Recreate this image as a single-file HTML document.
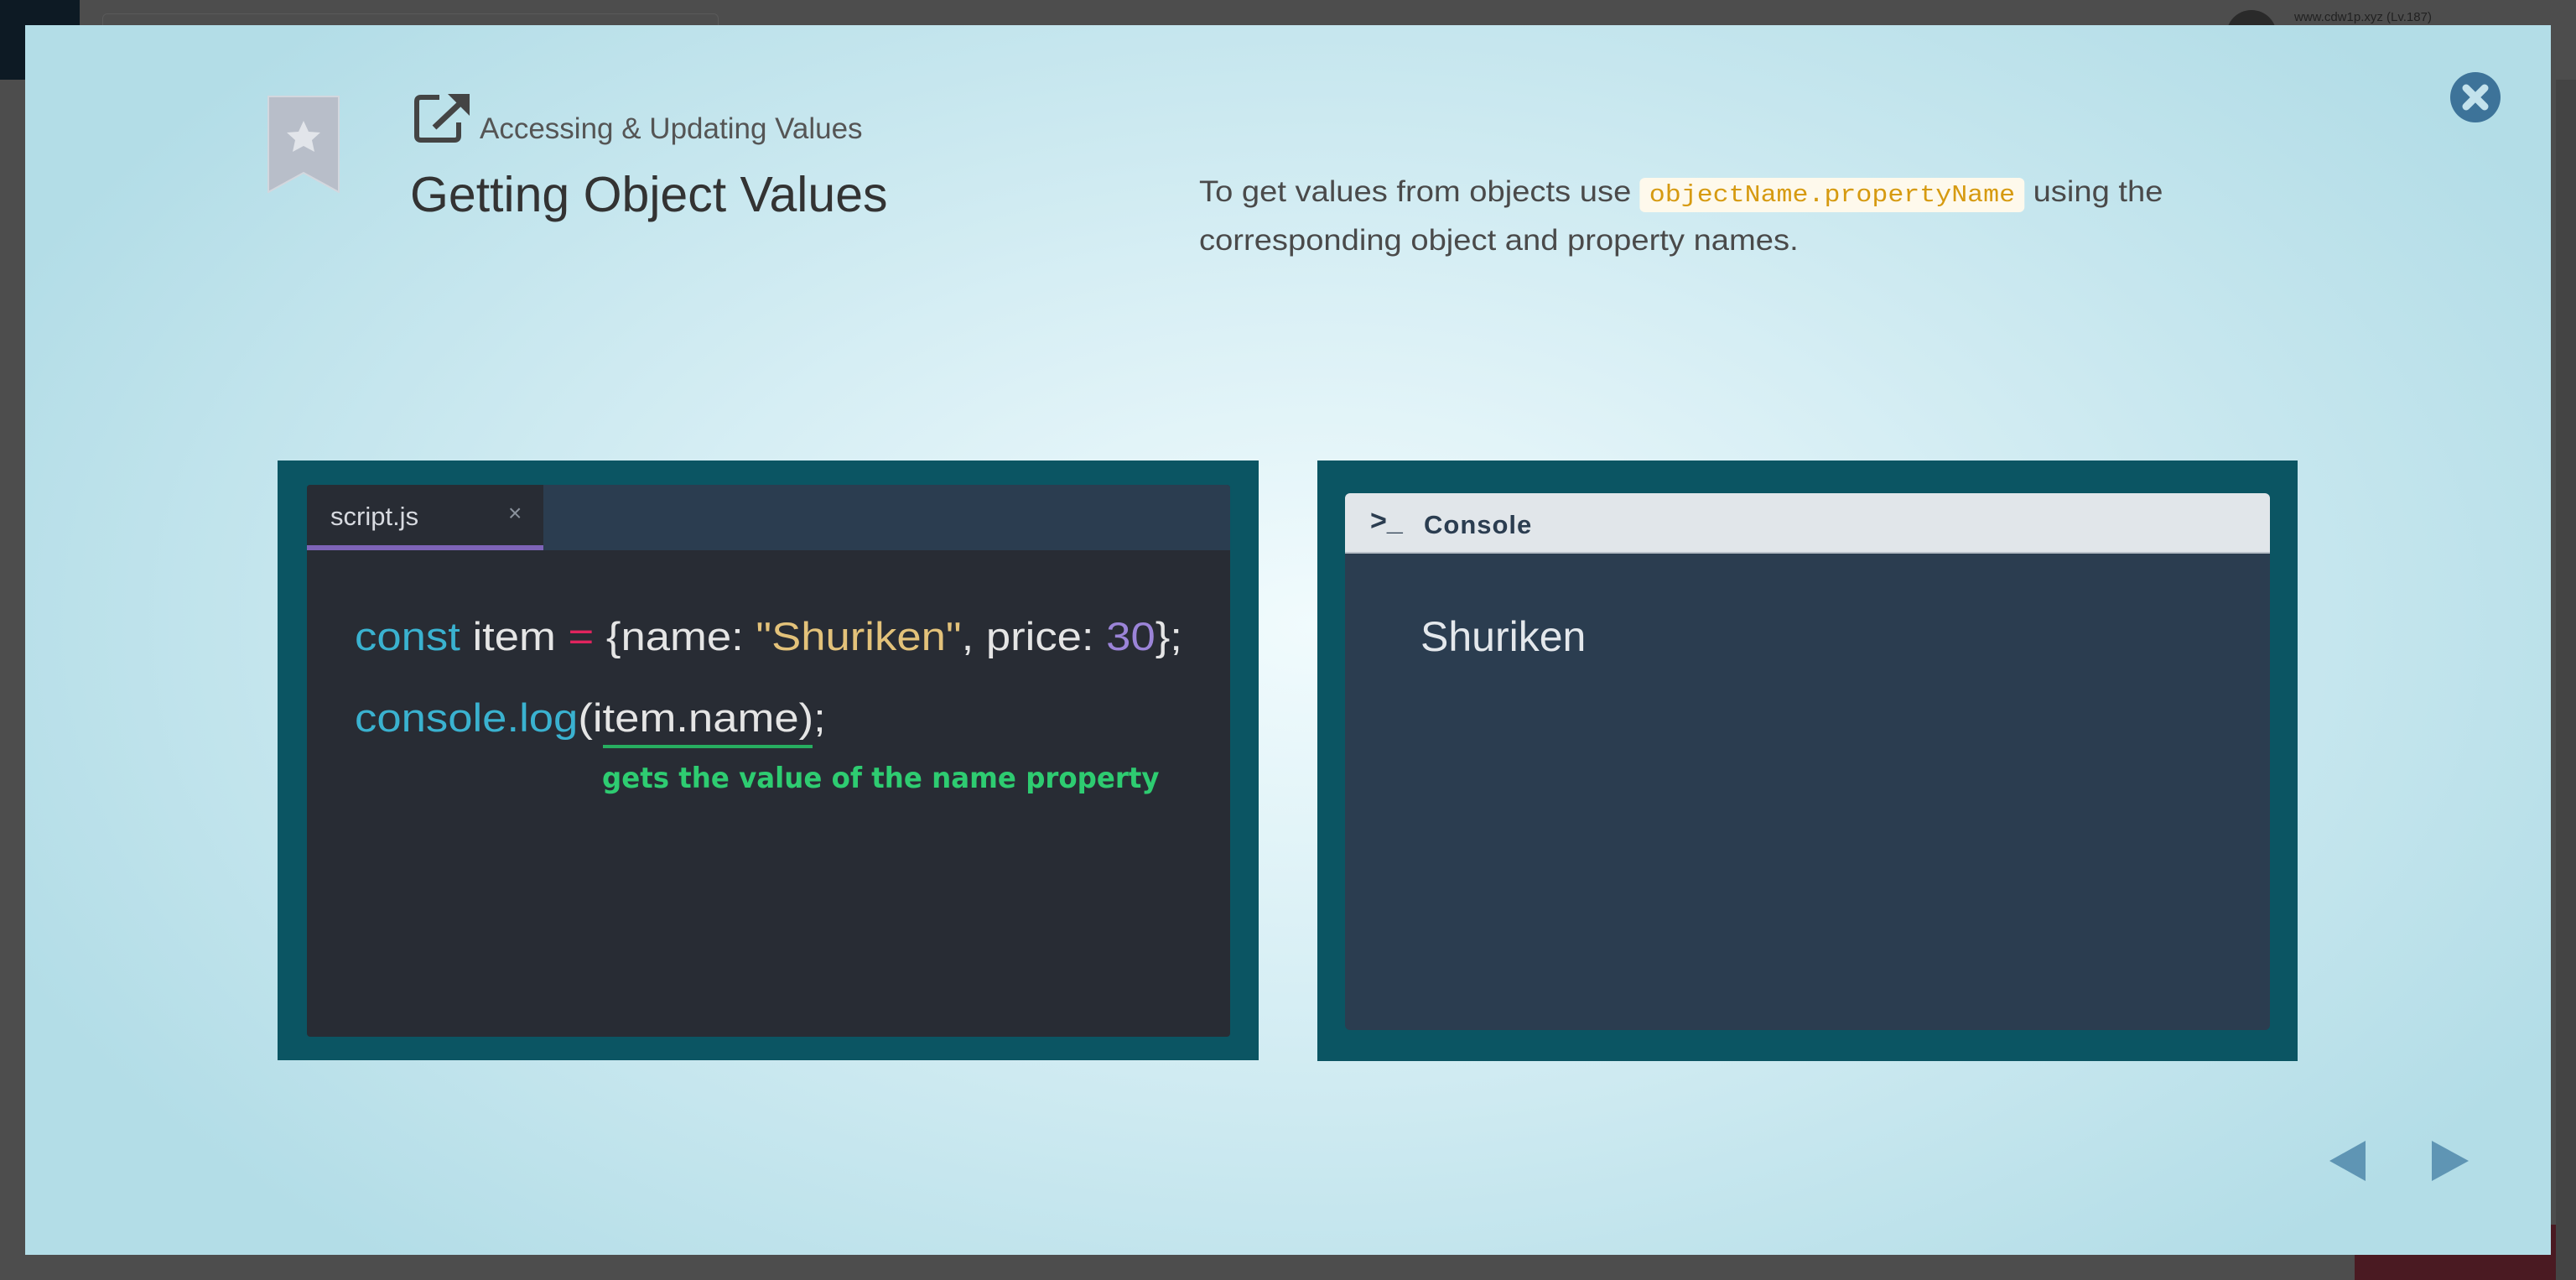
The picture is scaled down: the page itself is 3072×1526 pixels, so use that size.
<!DOCTYPE html>
<html style="overflow:hidden;width:3072px;height:1526px"><head><meta charset="utf-8"><style>
*{margin:0;padding:0;box-sizing:border-box}
body{width:3072px;height:1526px;background:#4d4d4d;position:relative;overflow:hidden;font-family:"Liberation Sans",sans-serif}
.abs{position:absolute}
#modal{left:30px;top:30px;width:3012px;height:1466px;background:radial-gradient(ellipse 1700px 1000px at 1540px 715px,#f1fbfd 0%,#d6eef4 45%,#b3dde7 100%)}
.sx{transform-origin:0 0;white-space:nowrap}
</style></head><body>
<div class="abs" style="left:0;top:0;width:95px;height:95px;background:#0d1a24"></div>
<div class="abs" style="left:122px;top:16px;width:735px;height:40px;border:1px solid #5a5a5a;border-radius:6px"></div>
<div class="abs" style="left:2655px;top:12px;width:60px;height:60px;border-radius:50%;background:#2a2a2a"></div>
<div class="abs" style="left:2736px;top:12px;font-size:15px;color:#222">www.cdw1p.xyz (Lv.187)</div>
<div class="abs" style="left:3048px;top:95px;width:24px;height:1431px;background:#444"></div>
<div class="abs" style="left:2808px;top:1460px;width:240px;height:66px;background:#4a1a22;overflow:hidden"></div>

<div id="modal" class="abs">
  <svg class="abs" style="left:289px;top:84px" width="86" height="116" viewBox="0 0 86 116">
    <path d="M1 1H85V115L43 92L1 115Z" fill="#b8bec9" stroke="#d3d7de" stroke-width="2"/>
    <path d="M43 30l6 13 14 1-10 9 3 14-13-7-13 7 3-14-10-9 14-1z" fill="#e2e5ea"/>
  </svg>
  <svg class="abs" style="left:464px;top:80px" width="68" height="60" viewBox="0 0 68 60">
    <path d="M30 6H8Q3 6 3 11V52Q3 57 8 57H48Q53 57 53 52V36" fill="none" stroke="#444" stroke-width="6"/>
    <path d="M40 2H66V28Z" fill="#444"/><path d="M24 42L58 10" stroke="#444" stroke-width="7"/>
  </svg>
  <div class="abs" style="left:542px;top:104px;font-size:35px;color:#555">Accessing &amp; Updating Values</div>
  <div class="abs" style="left:459px;top:168px;font-size:59px;color:#333">Getting Object Values</div>
  <div class="abs sx" style="left:1400px;top:172px;font-size:35px;color:#4a4a4a;line-height:54px;transform:scaleX(1.09)">To get values from objects use <span style="background:#fef9ec;border-radius:6px;padding:4px 10px;font-family:'Liberation Mono',monospace;font-size:29px;color:#d69a10">objectName.propertyName</span> using the<br>corresponding object and property names.</div>
  <svg class="abs" style="left:2892px;top:56px" width="60" height="60" viewBox="0 0 60 60">
    <circle cx="30" cy="30" r="30" fill="#3d7399"/>
    <path d="M19 19L41 41M41 19L19 41" stroke="#c3e2ec" stroke-width="9" stroke-linecap="round"/>
  </svg>
  <div class="abs" style="left:301px;top:519px;width:1170px;height:715px;background:#0b5563"></div>
  <div class="abs" style="left:336px;top:548px;width:1101px;height:658px;background:#282c34;border-radius:4px;overflow:hidden">
    <div style="height:78px;background:#2b3d50;position:relative">
      <div class="abs" style="left:0;top:0;width:282px;height:78px;background:#282c34;border-bottom:6px solid #7e64b8">
        <span class="abs" style="left:28px;top:20px;font-size:31px;color:#d7dae0">script.js</span>
        <span class="abs" style="left:240px;top:18px;font-size:28px;color:#8a929c">×</span>
      </div>
    </div>
    <div class="abs sx" style="left:57px;top:153px;font-size:47px;color:#e5e5e5;transform:scaleX(1.12)"><span style="color:#3ab2d0">const</span> item <span style="color:#e0245e">=</span> {name: <span style="color:#e3c27a">"Shuriken"</span>, price: <span style="color:#9b84d8">30</span>};</div>
    <div class="abs sx" style="left:57px;top:250px;font-size:47px;color:#e5e5e5;transform:scaleX(1.12)"><span style="color:#3ab2d0">console.log</span>(item.name);</div>
    <div class="abs" style="left:353px;top:310px;width:250px;height:4px;background:#27ae60"></div>
    <div class="abs sx" style="left:352px;top:330px;font-size:34px;font-weight:bold;color:#2ecc71;font-family:'DejaVu Sans Condensed','Liberation Sans',sans-serif;transform:scaleX(1.06)">gets the value of the name property</div>
  </div>
  <div class="abs" style="left:1541px;top:519px;width:1169px;height:716px;background:#0b5563"></div>
  <div class="abs" style="left:1574px;top:558px;width:1103px;height:640px;background:#2b3d50;border-radius:6px;overflow:hidden">
    <div style="height:72px;background:#e1e6ea;border-bottom:2px solid #b8c0c8;position:relative">
      <span class="abs" style="left:30px;top:14px;font-size:34px;color:#2b3d50;font-weight:bold">&gt;_</span>
      <span class="abs" style="left:94px;top:20px;font-size:31px;color:#2b3d50;font-weight:bold;letter-spacing:1px">Console</span>
    </div>
    <div class="abs" style="left:90px;top:142px;font-size:50px;color:#e4e8ec">Shuriken</div>
  </div>
  <svg class="abs" style="left:2748px;top:1330px" width="44" height="48"><path d="M43 0V48L0 24Z" fill="#5f95b4"/></svg>
  <svg class="abs" style="left:2870px;top:1330px" width="44" height="48"><path d="M0 0V48L44 24Z" fill="#5f95b4"/></svg>
</div>
</body></html>
